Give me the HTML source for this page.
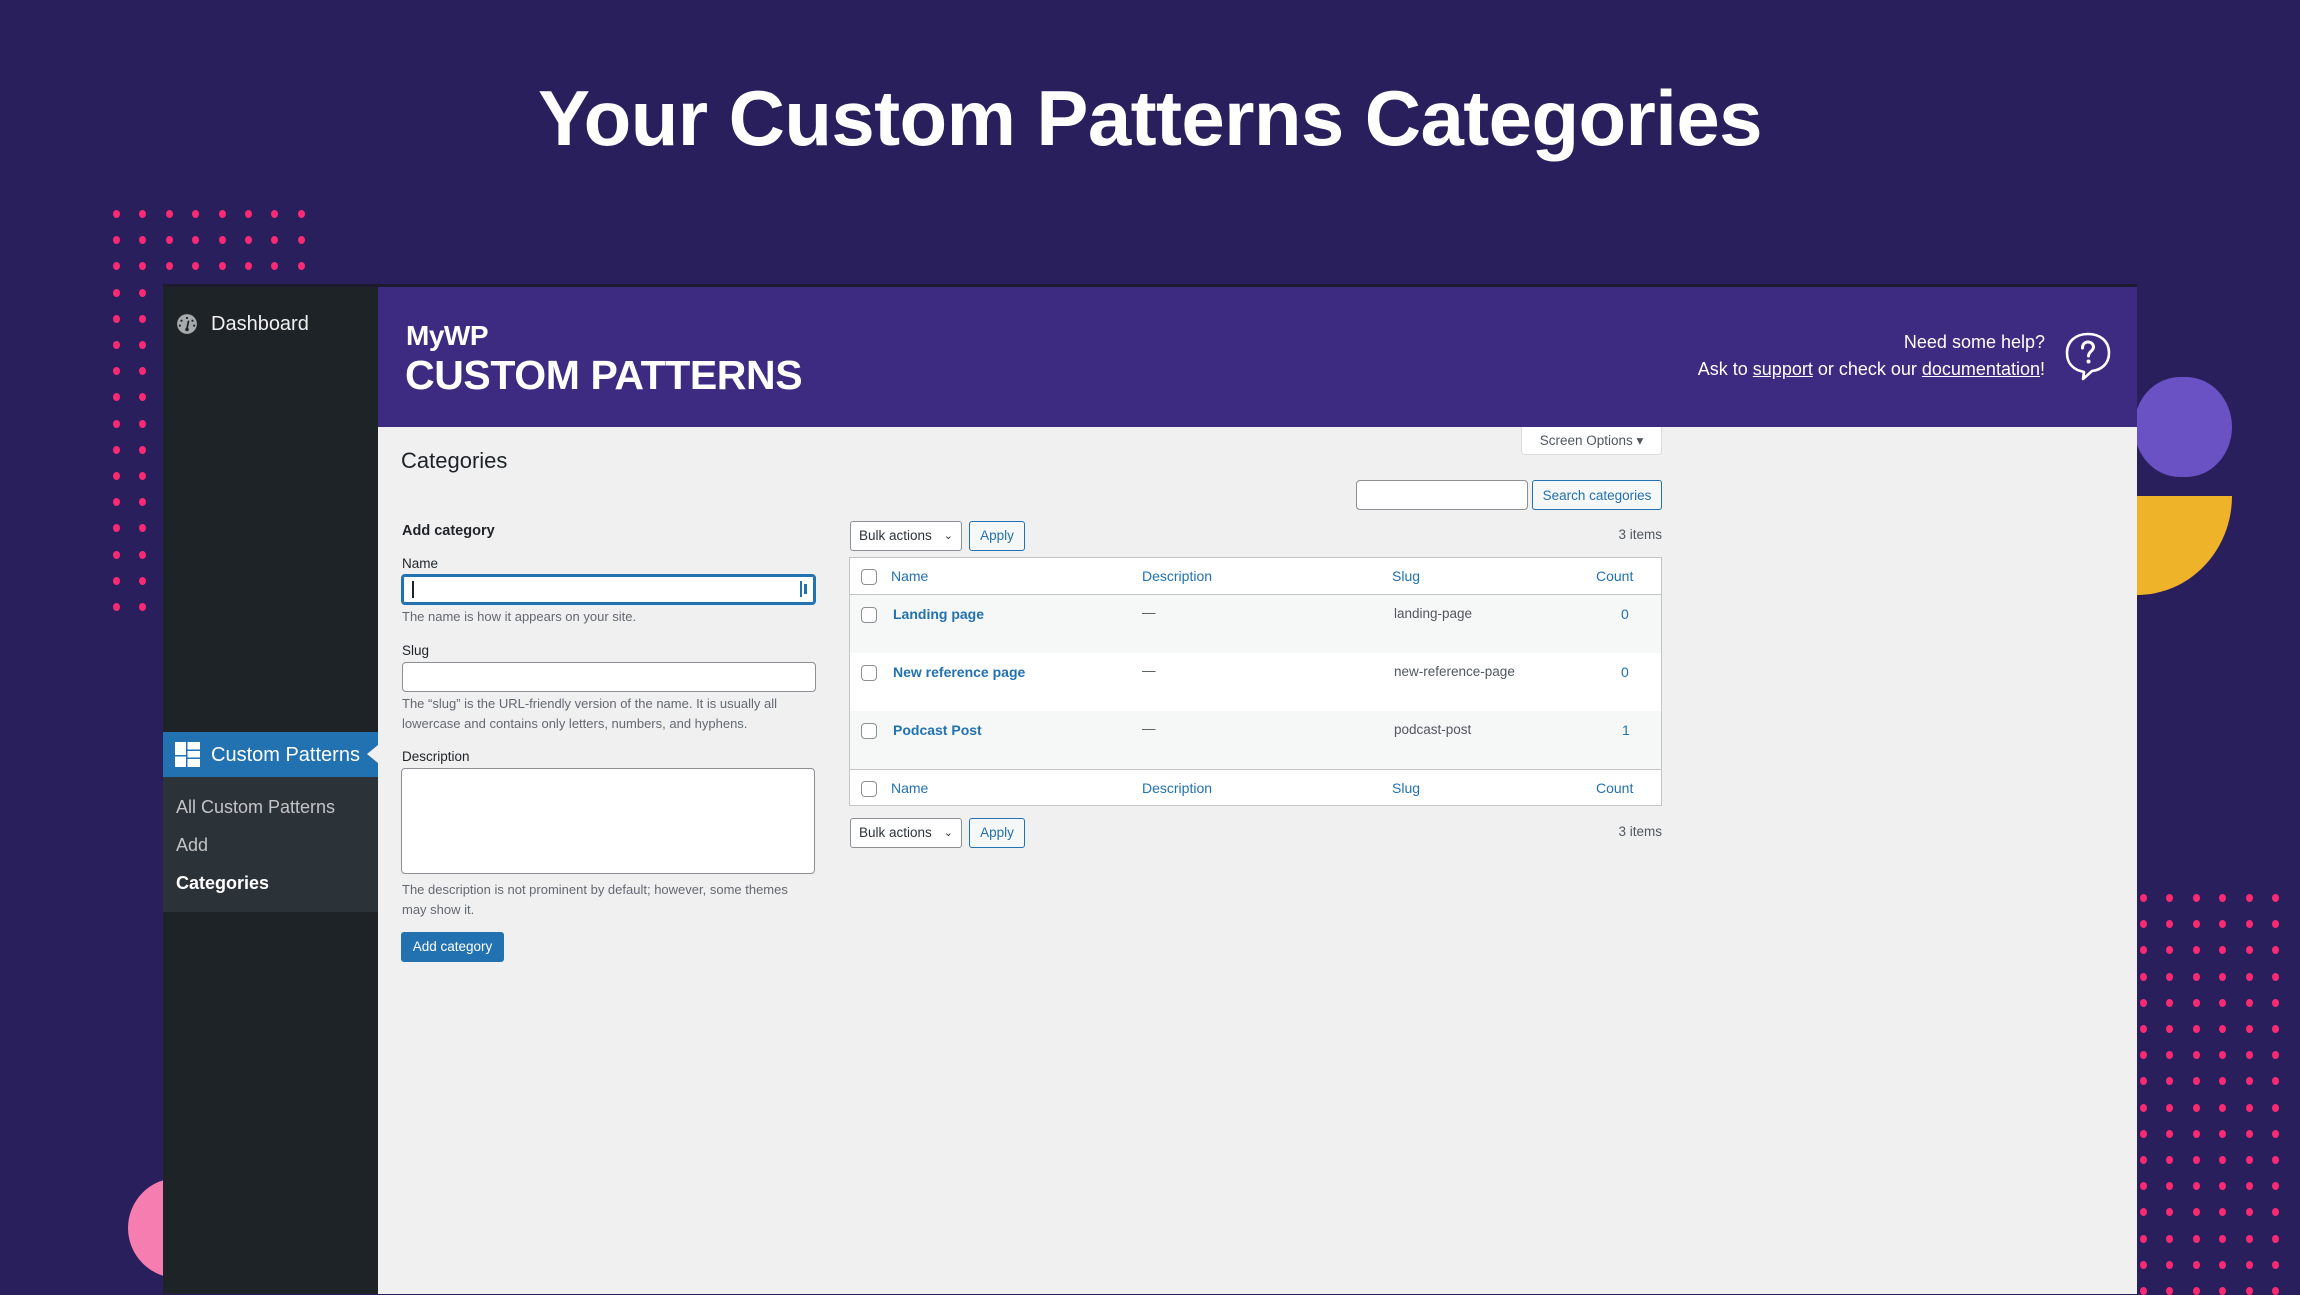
<!DOCTYPE html>
<html><head><meta charset="utf-8">
<style>
*{margin:0;padding:0;box-sizing:border-box}
body{width:2300px;height:1294px;overflow:hidden;background:#2a1f5d;font-family:"Liberation Sans",sans-serif;position:relative}
.a{position:absolute}
.dot{position:absolute;width:7px;height:8px;border-radius:50%;background:#f72a73}
.t{position:absolute;white-space:nowrap}
.lbl{font-size:13.5px;color:#1d2327}
.hint{font-size:13px;color:#646970;line-height:19.5px}
.inp{position:absolute;background:#fff;border:1px solid #8c8f94;border-radius:4px}
.btn2{position:absolute;border:1px solid #2271b1;color:#2271b1;background:#f6f7f7;border-radius:3px;font-size:13.5px;text-align:center}
.sel{position:absolute;border:1px solid #8c8f94;background:#fff;border-radius:3px;font-size:13.5px;color:#2c3338}
.cb{position:absolute;width:16px;height:16px;border:1px solid #8c8f94;border-radius:4px;background:#fff}
.th{position:absolute;font-size:14px;color:#2271b1}
.nm{position:absolute;font-size:14px;color:#2271b1;font-weight:bold}
.td{position:absolute;font-size:13.5px;color:#50575e}
</style></head><body>

<div class="t" style="left:0;width:2300px;top:73px;text-align:center;color:#fff;font-size:78px;font-weight:bold;letter-spacing:-0.6px;line-height:90px">Your Custom Patterns Categories</div>

<div id="dots1"></div>
<div id="dots2"></div>

<div class="a" style="left:2134px;top:377px;width:98px;height:100px;border-radius:46px 46px 46px 46px/50px 50px 50px 50px;background:#6a52c4"></div>
<div class="a" style="left:2137px;top:496px;width:95px;height:99px;border-bottom-right-radius:95px 99px;background:#efb32a"></div>
<div class="a" style="left:128px;top:1178px;width:100px;height:100px;border-radius:50%;background:#f57db0"></div>

<div class="a" style="left:163px;top:286px;width:215px;height:1008px;background:#1d2327"></div>
<svg class="a" style="left:176px;top:313px" width="22" height="22" viewBox="0 0 20 20"><circle cx="10" cy="10" r="9" fill="#a7aaad"/><path d="M10 3.5a1 1 0 1 1 0 2a1 1 0 1 1 0-2M5 6a1 1 0 1 1 0 2a1 1 0 1 1 0-2M15 6a1 1 0 1 1 0 2a1 1 0 1 1 0-2M3.5 10.5a1 1 0 1 1 0 2a1 1 0 1 1 0-2M16.5 10.5a1 1 0 1 1 0 2a1 1 0 1 1 0-2" fill="#1d2327"/><path d="M11.5 7L10 14" stroke="#1d2327" stroke-width="1.6"/><circle cx="10" cy="15" r="1.6" fill="#1d2327"/></svg>
<div class="t" style="left:211px;top:313px;font-size:20px;color:#f0f0f1">Dashboard</div>

<div class="a" style="left:163px;top:732px;width:215px;height:45px;background:#2271b1"></div>
<div class="a" style="left:367px;top:745px;width:0;height:0;border-top:9px solid transparent;border-bottom:9px solid transparent;border-right:11px solid #f0f0f1"></div>
<svg class="a" style="left:175px;top:742px" width="25" height="25" viewBox="0 0 25 25" fill="#fff"><rect x="0" y="0" width="11" height="13"/><rect x="0" y="14.5" width="11" height="10.5"/><rect x="12.5" y="0" width="12.5" height="7.5"/><rect x="12.5" y="9" width="12.5" height="6.5"/><rect x="12.5" y="17" width="12.5" height="8"/></svg>
<div class="t" style="left:211px;top:744px;font-size:20px;color:#fff">Custom Patterns</div>
<div class="a" style="left:163px;top:777px;width:215px;height:135px;background:#2c3338"></div>
<div class="t" style="left:176px;top:797px;font-size:18px;color:#c3c4c7">All Custom Patterns</div>
<div class="t" style="left:176px;top:835px;font-size:18px;color:#c3c4c7">Add</div>
<div class="t" style="left:176px;top:873px;font-size:18px;color:#fff;font-weight:bold">Categories</div>

<div class="a" style="left:378px;top:286px;width:1759px;height:141px;background:#3c2b80"></div>
<div class="a" style="left:163px;top:284px;width:1974px;height:3px;background:#1e1a30"></div>
<div class="t" style="left:406px;top:320px;font-size:28px;font-weight:bold;color:#fff;letter-spacing:-0.5px">MyWP</div>
<div class="t" style="left:405px;top:352px;font-size:41px;font-weight:bold;color:#fff;letter-spacing:-0.4px">CUSTOM PATTERNS</div>
<div class="t" style="right:255px;top:332px;font-size:18px;color:#fff;text-align:right">Need some help?</div>
<div class="t" style="right:255px;top:359px;font-size:18px;color:#fff;text-align:right">Ask to <u>support</u> or check our <u>documentation</u>!</div>
<svg class="a" style="left:2064px;top:331px" width="48" height="50" viewBox="0 0 48 50"><path d="M24 3C35 3 45 9 45 22C45 33 37 39 28 40L19 48L20 41C10 39 3 33 3 22C3 10 12 3 24 3Z" fill="none" stroke="#fff" stroke-width="2.6" stroke-linejoin="round"/><path d="M18.5 17C18.5 13 21 11 24 11C27.5 11 29.5 13.5 29.5 16C29.5 20 24.5 20.5 24.5 25" fill="none" stroke="#fff" stroke-width="3" stroke-linecap="round"/><circle cx="24.5" cy="30.5" r="2" fill="#fff"/></svg>

<div class="a" style="left:378px;top:427px;width:1759px;height:867px;background:#f0f0f1"></div>
<div class="t" style="left:401px;top:448px;font-size:22px;color:#1d2327">Categories</div>
<div class="a" style="left:1521px;top:427px;width:141px;height:28px;background:#fff;border:1px solid #dcdcde;border-top:none;border-radius:0 0 4px 4px;font-size:13.5px;color:#50575e;text-align:center;line-height:28px">Screen Options &#9662;</div>
<div class="inp" style="left:1356px;top:480px;width:172px;height:30px"></div>
<div class="btn2" style="left:1532px;top:480px;width:130px;height:30px;line-height:29px">Search categories</div>

<div class="t" style="left:402px;top:523px;font-size:14.5px;font-weight:bold;color:#1d2327">Add category</div>
<div class="t lbl" style="left:402px;top:556px">Name</div>
<div class="a" style="left:401px;top:574px;width:415px;height:31px;background:#fff;border:2px solid #2271b1;border-radius:4px;box-shadow:0 0 0 1px #2271b1 inset"></div>
<div class="a" style="left:412px;top:581px;width:1.5px;height:17px;background:#1d2327"></div>
<div class="a" style="left:800px;top:581px;width:2px;height:16px;background:#2271b1"></div><div class="a" style="left:804px;top:584px;width:3px;height:10px;background:#2271b1"></div>
<div class="t hint" style="left:402px;top:607px">The name is how it appears on your site.</div>
<div class="t lbl" style="left:402px;top:643px">Slug</div>
<div class="inp" style="left:402px;top:662px;width:414px;height:30px"></div>
<div class="t hint" style="left:402px;top:694px">The “slug” is the URL-friendly version of the name. It is usually all<br>lowercase and contains only letters, numbers, and hyphens.</div>
<div class="t lbl" style="left:402px;top:749px">Description</div>
<div class="inp" style="left:401px;top:768px;width:414px;height:106px"></div>
<div class="t hint" style="left:402px;top:880px">The description is not prominent by default; however, some themes<br>may show it.</div>
<div class="a" style="left:401px;top:932px;width:103px;height:30px;background:#2271b1;border-radius:3px;color:#fff;font-size:13.5px;text-align:center;line-height:30px">Add category</div>

<div class="sel" style="left:850px;top:521px;width:112px;height:30px;line-height:28px;padding-left:8px">Bulk actions <span style="font-size:11px;position:absolute;right:8px">&#8964;</span></div>
<div class="btn2" style="left:969px;top:521px;width:56px;height:30px;line-height:28px">Apply</div>
<div class="t" style="right:638px;top:527px;font-size:13.5px;color:#50575e">3 items</div>

<div class="a" style="left:849px;top:557px;width:813px;height:249px;background:#fff;border:1px solid #c3c4c7"></div>
<div class="a" style="left:850px;top:594px;width:811px;height:1px;background:#c3c4c7"></div>
<div class="a" style="left:850px;top:595px;width:811px;height:58px;background:#f6f7f7"></div>
<div class="a" style="left:850px;top:711px;width:811px;height:58px;background:#f6f7f7"></div>
<div class="a" style="left:850px;top:769px;width:811px;height:1px;background:#c3c4c7"></div>

<div class="cb" style="left:861px;top:569px"></div>
<div class="th" style="left:891px;top:568px">Name</div>
<div class="th" style="left:1142px;top:568px">Description</div>
<div class="th" style="left:1392px;top:568px">Slug</div>
<div class="th" style="left:1596px;top:568px">Count</div>

<div class="cb" style="left:861px;top:607px"></div>
<div class="nm" style="left:893px;top:606px">Landing page</div>
<div class="td" style="left:1142px;top:605px">—</div>
<div class="td" style="left:1394px;top:606px">landing-page</div>
<div class="th" style="left:1621px;top:606px">0</div>

<div class="cb" style="left:861px;top:665px"></div>
<div class="nm" style="left:893px;top:664px">New reference page</div>
<div class="td" style="left:1142px;top:663px">—</div>
<div class="td" style="left:1394px;top:664px">new-reference-page</div>
<div class="th" style="left:1621px;top:664px">0</div>

<div class="cb" style="left:861px;top:723px"></div>
<div class="nm" style="left:893px;top:722px">Podcast Post</div>
<div class="td" style="left:1142px;top:721px">—</div>
<div class="td" style="left:1394px;top:722px">podcast-post</div>
<div class="th" style="left:1622px;top:722px">1</div>

<div class="cb" style="left:861px;top:781px"></div>
<div class="th" style="left:891px;top:780px">Name</div>
<div class="th" style="left:1142px;top:780px">Description</div>
<div class="th" style="left:1392px;top:780px">Slug</div>
<div class="th" style="left:1596px;top:780px">Count</div>

<div class="sel" style="left:850px;top:818px;width:112px;height:30px;line-height:28px;padding-left:8px">Bulk actions <span style="font-size:11px;position:absolute;right:8px">&#8964;</span></div>
<div class="btn2" style="left:969px;top:818px;width:56px;height:30px;line-height:28px">Apply</div>
<div class="t" style="right:638px;top:824px;font-size:13.5px;color:#50575e">3 items</div>

<script>
(function(){
var h='';
for(var r=0;r<16;r++){var n=r<3?8:2;for(var c=0;c<n;c++){h+='<div class="dot" style="left:'+(113+c*26.4)+'px;top:'+(210+r*26.2)+'px"></div>';}}
document.getElementById('dots1').innerHTML=h;
h='';
for(var r=0;r<16;r++){for(var c=0;c<6;c++){h+='<div class="dot" style="left:'+(2140+c*26.4)+'px;top:'+(894+r*26.2)+'px"></div>';}}
document.getElementById('dots2').innerHTML=h;
})();
</script>
</body></html>
